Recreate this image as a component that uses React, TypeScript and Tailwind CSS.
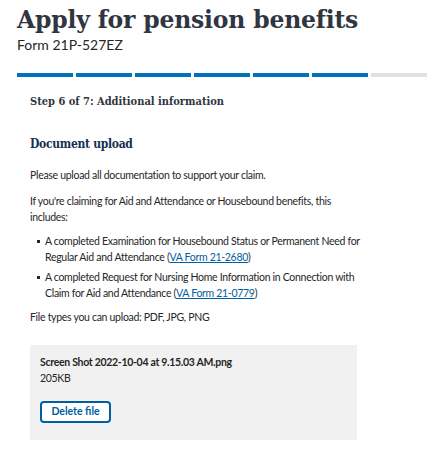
import React from "react";

export default function App() {
  const segs = [1, 1, 1, 1, 1, 1, 0];
  const body = "text-[10.5px] tracking-[-0.3px] whitespace-nowrap";
  return (
    <div className="w-[432px] h-[450px] overflow-hidden bg-white pl-[17px] pr-[5px] font-['Lato',sans-serif] text-[#262626]">
      <h1 className="font-['DejaVu_Serif',serif] font-bold text-[23.5px] leading-[30px] pt-[5px] text-[#2f3640] tracking-[-0.2px] whitespace-nowrap">
        Apply for pension benefits
      </h1>
      <div className="text-[14px] leading-[18px] mt-[1px] text-[#262626]">Form 21P-527EZ</div>
      <div className="flex gap-[3px] mt-[19px] h-[4px]">
        {segs.map((s, i) => (
          <div key={i} className={s ? "flex-1 bg-[#0071bb]" : "flex-1 bg-[#dfe1e2]"} />
        ))}
      </div>
      <div className="pl-[13px] w-[340px]">
        <h2 className="font-['DejaVu_Serif_Condensed','DejaVu_Serif',serif] font-bold text-[11px] leading-[14px] mt-[18px] text-[#2f3640] whitespace-nowrap">
          Step 6 of 7: Additional information
        </h2>
        <h3 className="font-['DejaVu_Serif_Condensed','DejaVu_Serif',serif] font-bold text-[12px] tracking-[-0.3px] leading-[18px] mt-[26px] text-[#162e51] whitespace-nowrap">
          Document upload
        </h3>
        <p className={`${body} leading-[16px] mt-[14px]`}>
          Please upload all documentation to support your claim.
        </p>
        <p className={`${body} leading-[16px] mt-[10px]`}>
          If you're claiming for Aid and Attendance or Housebound benefits, this
          <br />
          includes:
        </p>
        <ul className={`${body} mt-[9px] flex flex-col gap-[5px] leading-[15.5px]`}>
          <li className="flex">
            <span className="w-[15px] shrink-0 pl-[7px] pt-[6px]">
              <span className="block w-[3px] h-[3px] bg-[#262626]" />
            </span>
            <span>
              A completed Examination for Housebound Status or Permanent Need for
              <br />
              Regular Aid and Attendance (
              <a className="text-[#005ea2] underline">VA Form 21-2680</a>)
            </span>
          </li>
          <li className="flex">
            <span className="w-[15px] shrink-0 pl-[7px] pt-[6px]">
              <span className="block w-[3px] h-[3px] bg-[#262626]" />
            </span>
            <span>
              A completed Request for Nursing Home Information in Connection with
              <br />
              Claim for Aid and Attendance (
              <a className="text-[#005ea2] underline">VA Form 21-0779</a>)
            </span>
          </li>
        </ul>
        <p className={`${body} leading-[16px] mt-[8px]`}>File types you can upload: PDF, JPG, PNG</p>
        <div className="mt-[20px] w-[327px] h-[95px] bg-[#f1f1f1] pl-[10px] pt-[10px]">
          <div className={`${body} leading-[15px] font-bold`}>Screen Shot 2022-10-04 at 9.15.03 AM.png</div>
          <div className={`${body} leading-[15px] mt-[1px]`}>205KB</div>
          <button className="mt-[15px] w-[71px] h-[22px] border-2 border-[#005ea2] rounded-[4px] text-[#005ea2] text-[10.5px] font-bold bg-white flex items-center justify-center">
            Delete file
          </button>
        </div>
      </div>
    </div>
  );
}
